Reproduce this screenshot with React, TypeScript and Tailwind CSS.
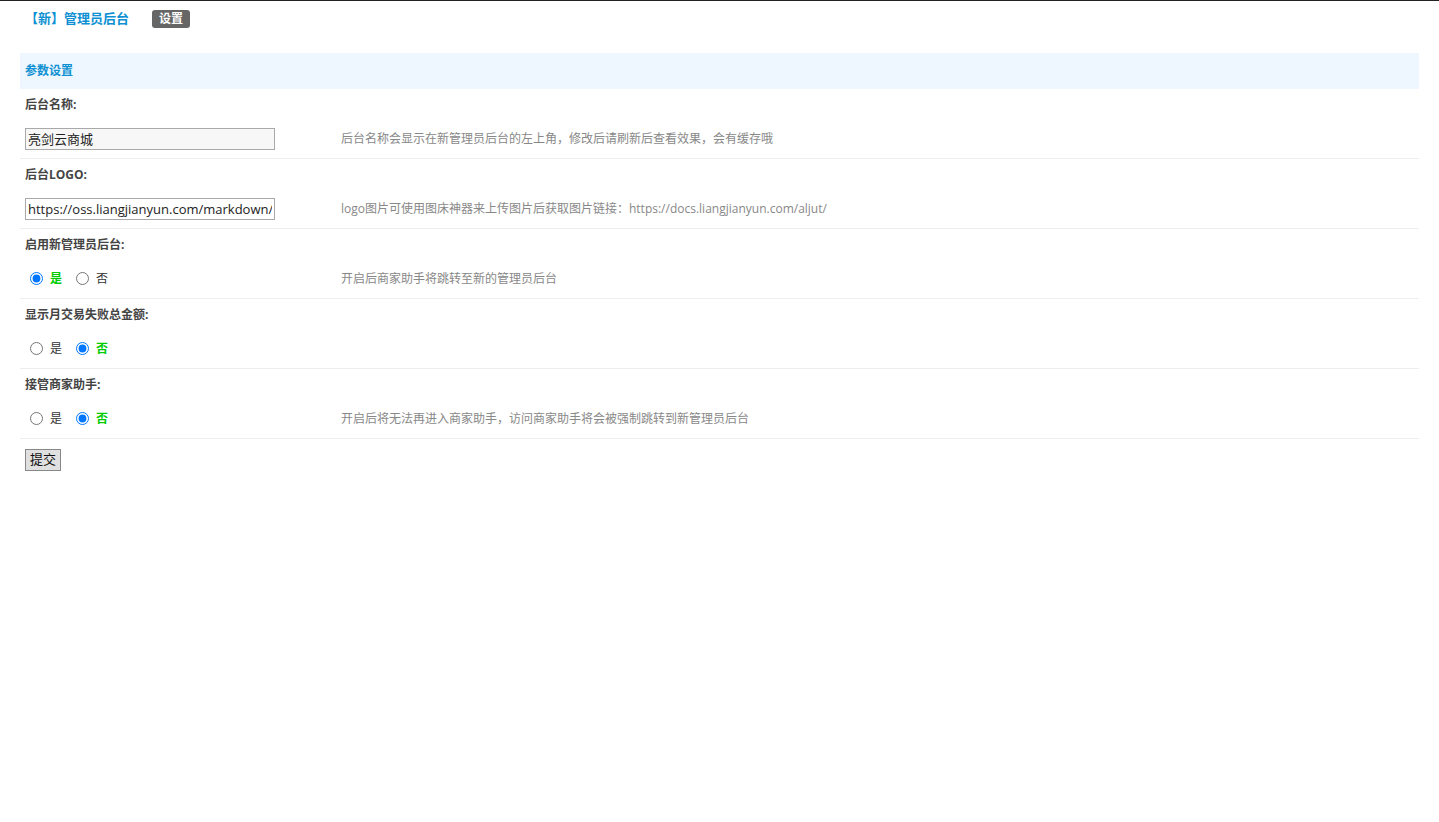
import React from "react";

const font = "font-['Open_Sans','Noto_Sans_CJK_SC',sans-serif]";

function LabelRow({ label }: { label: string }) {
  return (
    <div className="col-span-2 flex h-8 items-center px-[5px] text-[12px] font-bold text-[#444]">
      {label}
    </div>
  );
}

function ValueRow({ children, desc }: { children: React.ReactNode; desc?: string }) {
  return (
    <>
      <div className="flex h-[38px] items-center border-b border-[#eeeeee] px-[5px] pb-[2px]">{children}</div>
      <div className="flex h-[38px] items-center border-b border-[#eeeeee] px-[5px] pb-[2px] text-[12px] text-[#888]">
        {desc}
      </div>
    </>
  );
}

function RadioPair({ name, value }: { name: string; value: boolean }) {
  return (
    <div className="flex items-center text-[12px]">
      <label className="flex items-center">
        <input type="radio" name={name} defaultChecked={value} className="m-0 ml-[5px] h-[13px] w-[13px]" />
        <span className={value ? "ml-[7px] font-bold text-[#00cc00]" : "ml-[7px] text-[#333]"}>是</span>
      </label>
      <label className="ml-[14px] flex items-center">
        <input type="radio" name={name} defaultChecked={!value} className="m-0 h-[13px] w-[13px]" />
        <span className={!value ? "ml-[7px] font-bold text-[#00cc00]" : "ml-[7px] text-[#333]"}>否</span>
      </label>
    </div>
  );
}

export default function App() {
  return (
    <div className={`min-h-[822px] border-t border-[#222] bg-white ${font}`}>
      <div className="flex h-9 items-center px-[25px]">
        <span className="text-[13px] font-bold text-[#0e90d2]">【新】管理员后台</span>
        <span className="ml-[23px] rounded-[3px] bg-[#666] px-[7px] py-[1px] text-[12px] font-bold leading-[16px] text-white">
          设置
        </span>
      </div>

      <div className="mx-5 mt-4">
        <div className="grid grid-cols-[316px_1fr]">
          <div className="col-span-2 flex h-9 items-center bg-[#eef7ff] px-[5px] text-[12px] font-bold text-[#0e90d2]">
            参数设置
          </div>

          <LabelRow label="后台名称:" />
          <ValueRow desc="后台名称会显示在新管理员后台的左上角，修改后请刷新后查看效果，会有缓存哦">
            <input
              defaultValue="亮剑云商城"
              className="h-[22px] w-[250px] border border-[#a9a9a9] bg-[#f7f7f7] px-[2px] text-[13px] leading-[18px] text-[#222] outline-none"
            />
          </ValueRow>

          <LabelRow label="后台LOGO:" />
          <ValueRow desc="logo图片可使用图床神器来上传图片后获取图片链接：https://docs.liangjianyun.com/aljut/">
            <input
              defaultValue="https://oss.liangjianyun.com/markdown/"
              className="h-[22px] w-[250px] border border-[#a9a9a9] bg-white px-[2px] text-[13px] leading-[18px] text-[#222] outline-none"
            />
          </ValueRow>

          <LabelRow label="启用新管理员后台:" />
          <ValueRow desc="开启后商家助手将跳转至新的管理员后台">
            <RadioPair name="enable" value={true} />
          </ValueRow>

          <LabelRow label="显示月交易失败总金额:" />
          <ValueRow>
            <RadioPair name="fail" value={false} />
          </ValueRow>

          <LabelRow label="接管商家助手:" />
          <ValueRow desc="开启后将无法再进入商家助手，访问商家助手将会被强制跳转到新管理员后台">
            <RadioPair name="takeover" value={false} />
          </ValueRow>
        </div>

        <div className="px-[5px] pt-[7px]">
          <button className="h-[22px] w-9 border border-[#888] bg-[#e0e0e0] text-[13px] text-[#111]">提交</button>
        </div>
      </div>
    </div>
  );
}
